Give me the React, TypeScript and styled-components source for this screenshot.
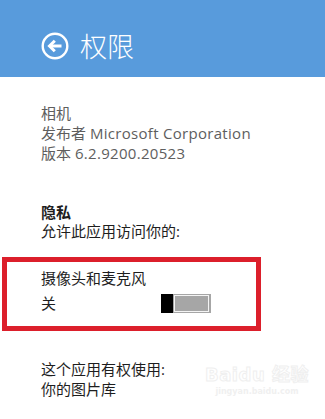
import React from "react";
import styled, { createGlobalStyle } from "styled-components";

const Global = createGlobalStyle`
  html, body { margin: 0; padding: 0; background: #ffffff; }
  body {
    width: 325px; height: 419px; overflow: hidden;
    font-family: "Open Sans", "Noto Sans CJK SC", sans-serif;
  }
`;

const Page = styled.div`
  position: relative;
  width: 325px;
  height: 419px;
  background: #ffffff;
  display: flex;
  flex-direction: column;
`;

const Header = styled.header`
  box-sizing: border-box;
  height: 77px;
  background: #589bdc;
  padding: 32px 0 0 41px;
  display: flex;
  align-items: flex-start;
  gap: 11px;
`;

const BackButton = styled.div`
  width: 28px;
  height: 28px;
  display: flex;
`;

const Title = styled.h1`
  margin: 0;
  font-family: "Noto Sans CJK SC", sans-serif;
  font-weight: 300;
  font-size: 27px;
  line-height: 28px;
  color: #ffffff;
`;

const Block = styled.section<{ $top: number; $lh: number; $color: string }>`
  margin: ${(p) => p.$top}px 0 0 41px;
  font-size: 15px;
  line-height: ${(p) => p.$lh}px;
  color: ${(p) => p.$color};
  font-family: "Open Sans", "Noto Sans CJK SC", sans-serif;
`;

const Line = styled.div<{ $bold?: boolean }>`
  font-weight: ${(p) => (p.$bold ? 700 : 400)};
  white-space: nowrap;
`;

const Latin = styled.span`
  letter-spacing: 0.3px;
`;

const RedBox = styled.section`
  box-sizing: border-box;
  width: 259px;
  margin: 16px 0 0 2px;
  border: 5px solid #dc1f2b;
  padding: 6px 0 13px 34px;
  font-size: 15px;
  line-height: 20px;
  color: #1e1e1e;
  font-family: "Noto Sans CJK SC", sans-serif;
`;

const SettingRow = styled.div`
  margin-top: 5px;
  display: flex;
  align-items: center;
  height: 20px;
`;

const StateLabel = styled.span`
  width: 120px;
`;

const Toggle = styled.div`
  display: flex;
  width: 50px;
  height: 19px;
`;

const Thumb = styled.div`
  width: 12px;
  height: 100%;
  background: #000000;
`;

const Track = styled.div`
  box-sizing: border-box;
  flex: 1;
  height: 100%;
  background: #a6a6a6;
  border: 1px solid #a6a6a6;
  border-right-width: 2px;
  box-shadow: inset 0 0 0 1px #f4f4f4;
`;

const Watermark = styled.div`
  position: absolute;
  left: 205px;
  top: 364px;
  display: flex;
  flex-direction: column;
  align-items: center;
  color: #ffffff;
  white-space: nowrap;
  pointer-events: none;
`;

const WmLogo = styled.div`
  font-family: "DejaVu Sans", "Noto Sans CJK SC", sans-serif;
  font-weight: 700;
  font-size: 18px;
  line-height: 22px;
  -webkit-text-stroke: 1px #efefef;
  letter-spacing: 0.5px;
`;

const WmUrl = styled.div`
  font-family: "DejaVu Sans", sans-serif;
  font-weight: 700;
  font-size: 8px;
  line-height: 12px;
  color: #f0f0f0;
`;

const BackIcon = () => (
  <svg width="28" height="28" viewBox="0 0 28 28" fill="none">
    <circle cx="14" cy="14" r="12.3" stroke="#fff" strokeWidth="2.4" />
    <path d="M20.5 14H8.5" stroke="#fff" strokeWidth="3" />
    <path d="M13.8 8.7L8.5 14l5.3 5.3" stroke="#fff" strokeWidth="3" />
  </svg>
);

export default function App() {
  return (
    <>
      <Global />
      <Page>
        <Header>
          <BackButton>
            <BackIcon />
          </BackButton>
          <Title>权限</Title>
        </Header>

        <Block $top={26} $lh={20} $color="#5e5e5e">
          <Line>相机</Line>
          <Line>
            发布者 <Latin>Microsoft Corporation</Latin>
          </Line>
          <Line>
            版本 <Latin>6.2.9200.20523</Latin>
          </Line>
        </Block>

        <Block $top={40} $lh={19} $color="#1e1e1e">
          <Line $bold>隐私</Line>
          <Line>允许此应用访问你的:</Line>
        </Block>

        <RedBox>
          <div>摄像头和麦克风</div>
          <SettingRow>
            <StateLabel>关</StateLabel>
            <Toggle>
              <Thumb />
              <Track />
            </Toggle>
          </SettingRow>
        </RedBox>

        <Block $top={28} $lh={20} $color="#1e1e1e">
          <Line>这个应用有权使用:</Line>
          <Line>你的图片库</Line>
        </Block>

        <Watermark>
          <WmLogo>Baidu 经验</WmLogo>
          <WmUrl>jingyan.baidu.com</WmUrl>
        </Watermark>
      </Page>
    </>
  );
}
